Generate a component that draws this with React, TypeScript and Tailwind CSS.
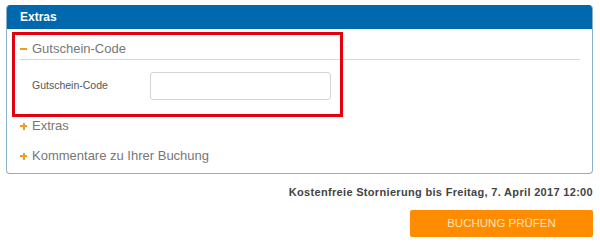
import React from 'react'

function Minus() {
  return <span className="inline-block h-[2px] w-[7px] bg-[#f39a1f]" />
}

function Plus() {
  return (
    <span className="relative inline-block h-[7px] w-[7px]">
      <span className="absolute left-0 top-[2.5px] h-[2px] w-[7px] bg-[#f39a1f]" />
      <span className="absolute left-[2.5px] top-0 h-[7px] w-[2px] bg-[#f39a1f]" />
    </span>
  )
}

function CollapsedRow({ title }: { title: string }) {
  return (
    <div className="ml-[13px] flex h-[20px] items-center gap-[5px] text-[13px] text-[#777]">
      <Plus />
      <span>{title}</span>
    </div>
  )
}

export default function App() {
  return (
    <div className="relative h-[249px] w-[600px] bg-white font-['Liberation_Sans',Arial,sans-serif]">
      <div className="pl-[6px] pr-[7px] pt-[5px]">
        <div className="h-[169px] overflow-hidden rounded-[4px] border border-t-0 border-[#8bb0ca]">
          <div className="flex h-[24px] items-center bg-[#0069ae] px-[13px] text-[12px] font-bold text-white">
            Extras
          </div>

          <div className="mx-[12px] mt-[10px] flex h-[21px] items-center gap-[5px] border-b border-[#f0d7a6] pl-[1px] text-[13px] text-[#777]">
            <Minus />
            <span>Gutschein-Code</span>
          </div>

          <div className="mt-[12px] flex items-center">
            <label className="ml-[25px] w-[118px] text-[10.5px] text-[#555]">Gutschein-Code</label>
            <input
              type="text"
              className="h-[28px] w-[181px] rounded-[3px] border border-[#d4d4d4] bg-white outline-none"
            />
          </div>

          <div className="mt-[16px] flex flex-col gap-[10px]">
            <CollapsedRow title="Extras" />
            <CollapsedRow title="Kommentare zu Ihrer Buchung" />
          </div>
        </div>

        <div className="mt-[11px] text-right text-[11px] font-bold leading-[14px] tracking-[0.32px] text-[#444]">
          Kostenfreie Stornierung bis Freitag, 7. April 2017 12:00
        </div>

        <div className="mt-[11px] flex justify-end">
          <button className="flex h-[27px] w-[183px] items-center justify-center rounded-[2px] bg-[#ff8c00] text-[11.5px] uppercase text-[#fde3bd]">
            Buchung prüfen
          </button>
        </div>
      </div>

      <div className="pointer-events-none absolute left-[12px] top-[32px] h-[85px] w-[331px] border-[3px] border-[#e3000f]" />
    </div>
  )
}
